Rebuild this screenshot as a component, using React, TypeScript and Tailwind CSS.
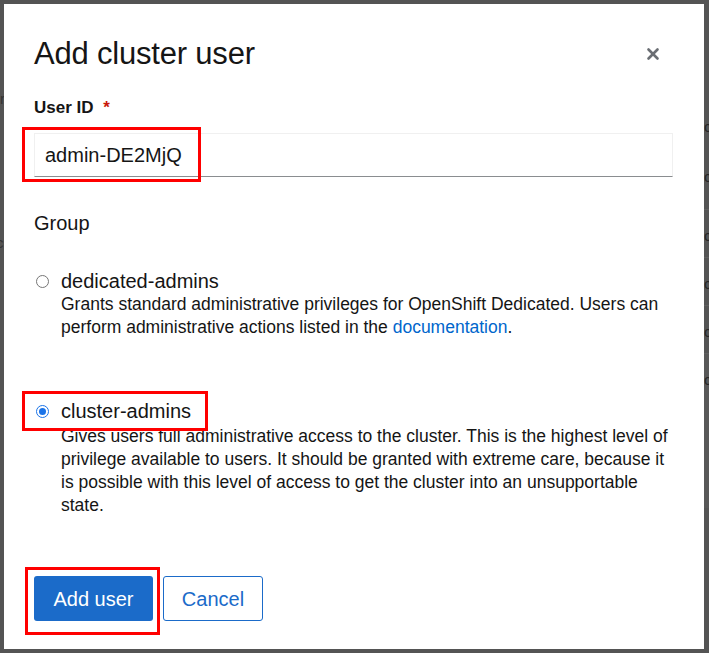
import { X } from "lucide-react";

const font = { fontFamily: '"Liberation Sans", Arial, sans-serif' };

function Radio({ checked }: { checked: boolean }) {
  return checked ? (
    <span className="flex h-[13px] w-[13px] shrink-0 items-center justify-center rounded-full border-[1.5px] border-[#1a73e8] bg-white">
      <span className="h-[7px] w-[7px] rounded-full bg-[#1a73e8]" />
    </span>
  ) : (
    <span className="h-[13px] w-[13px] shrink-0 rounded-full border border-[#767676] bg-white" />
  );
}

function Annot({ className }: { className: string }) {
  return <span className={`pointer-events-none absolute border-[3px] border-[#ff0000] ${className}`} />;
}

export default function App() {
  return (
    <div className="relative h-[653px] w-[709px] overflow-hidden bg-[#545454]" style={font}>
      {/* backdrop page bits peeking out on the right */}
      <div className="absolute right-0 top-0 flex h-full w-[5px] flex-col">
        <div className="h-[210px] border-b border-[#606060]" />
        <div className="h-[48px] border-b border-[#606060]" />
        <div className="h-[48px] border-b border-[#606060]" />
        <div className="h-[48px] border-b border-[#606060]" />
        <div className="h-[154px] bg-[#585858]" />
      </div>
      {[127, 177, 236, 284, 332, 380].map((y) => (
        <span key={y} className="absolute left-[704px] text-[15px] leading-none text-[#262626]" style={{ top: y - 8 }}>
          c
        </span>
      ))}
      <span className="absolute left-0 top-[91px] text-[15px] leading-none text-[#333]">r</span>
      <span className="absolute left-[-4px] top-[235px] text-[15px] leading-none text-[#333]">c</span>

      <div className="relative ml-[4px] mt-[4px] flex h-[645px] w-[700px] flex-col bg-white px-[30px] pt-[32px] text-[#151515]">
        <div className="flex items-center justify-between">
          <h1 className="text-[31px] leading-[36px] font-normal tracking-[-0.2px]">Add cluster user</h1>
          <X className="mr-[12px] h-[18px] w-[18px] text-[#6a6e73]" strokeWidth={3.5} />
        </div>

        <div className="mt-[24px] text-[17px] leading-[24px] font-bold">
          User ID <span className="ml-[5px] text-[#c9190b]">*</span>
        </div>

        <div className="relative mt-[13px]">
          <div className="flex h-[44px] w-[639px] items-center border border-b-[#8a8d90] border-[#f0f0f0] px-[10px] text-[20px]">
            admin-DE2MjQ
          </div>
          <Annot className="left-[-12px] top-[-6px] h-[55px] w-[179px]" />
        </div>

        <div className="mt-[34px] text-[20px] leading-[24px]">Group</div>

        <div className="mt-[34px]">
          <div className="flex items-center gap-[12px] pl-[2px] text-[20px] leading-[24px]">
            <Radio checked={false} />
            <span>dedicated-admins</span>
          </div>
          <p className="pl-[27px] text-[17.5px] leading-[23px]">
            Grants standard administrative privileges for OpenShift Dedicated. Users can perform administrative actions
            listed in the <span className="text-[#0066cc]">documentation</span>.
          </p>
        </div>

        <div className="mt-[60px]">
          <div className="relative flex w-fit items-center gap-[12px] pl-[2px] text-[20px] leading-[24px]">
            <Radio checked />
            <span>cluster-admins</span>
            <Annot className="left-[-12px] top-[-8px] h-[40px] w-[186px]" />
          </div>
          <p className="mt-[2px] pl-[27px] text-[17.5px] leading-[23px]">
            Gives users full administrative access to the cluster. This is the highest level of privilege available to
            users. It should be granted with extreme care, because it is possible with this level of access to get the
            cluster into an unsupportable state.
          </p>
        </div>

        <div className="mt-[59px] flex gap-[10px]">
          <div className="relative">
            <button className="h-[45px] w-[119px] rounded-[3px] bg-[#1b6bc9] text-[20px] text-white">Add user</button>
            <Annot className="left-[-9px] top-[-9px] h-[68px] w-[135px]" />
          </div>
          <button className="h-[45px] w-[100px] rounded-[3px] border border-[#1b6bc9] bg-white text-[20px] text-[#1b6bc9]">
            Cancel
          </button>
        </div>
      </div>
    </div>
  );
}
